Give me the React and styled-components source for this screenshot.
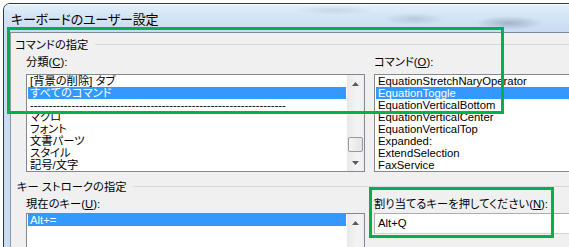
import styled, { createGlobalStyle } from 'styled-components';

const GlobalStyle = createGlobalStyle`
  html, body {
    margin: 0;
    padding: 0;
    background: #ffffff;
    overflow: hidden;
  }
  body {
    font-family: "Liberation Sans", "Noto Sans CJK JP", sans-serif;
    font-feature-settings: "palt";
    color: #000;
  }
`;

const Screen = styled.div`
  position: relative;
  width: 569px;
  height: 247px;
  overflow: hidden;
  padding: 3px 0 0 3px;
  box-sizing: border-box;
`;

const Window = styled.div`
  width: 640px;
  height: 300px;
  border: 1px solid #2c3845;
  border-radius: 7px 0 0 0;
  background: #cadcf0;
  display: flex;
  flex-direction: column;
  box-sizing: border-box;
  overflow: hidden;
`;

const TitleBar = styled.div`
  height: 28px;
  flex: none;
  display: flex;
  align-items: center;
  padding-left: 7px;
  font-family: "Noto Sans CJK JP", sans-serif;
  font-size: 13px;
  letter-spacing: -0.2px;
  background:
    radial-gradient(ellipse 34px 7px at 505px 19px, rgba(105, 125, 145, 0.45), transparent),
    radial-gradient(ellipse 30px 6px at 410px 15px, rgba(130, 150, 170, 0.35), transparent),
    radial-gradient(ellipse 40px 5px at 330px 6px, rgba(150, 170, 190, 0.3), transparent),
    linear-gradient(180deg, #e6f0fa 0%, #d6e6f6 35%, #c9dcf1 100%);
  box-shadow: inset 0 1px 0 rgba(255, 255, 255, 0.8);
`;

const Client = styled.div`
  flex: 1;
  margin-left: 6px;
  border-top: 1px solid #7c8a98;
  border-left: 1px solid #8b9aaa;
  background: #f0f0f0;
  font-size: 11.3px;
`;

const GroupHeader = styled.div`
  display: flex;
  align-items: center;
  gap: 7px;
  height: 14px;
  margin-top: ${(p) => p.$top}px;
  padding-left: ${(p) => p.$indent}px;
  white-space: nowrap;

  &::after {
    content: "";
    flex: 1;
    height: 1px;
    background: #d5dae0;
  }
`;

const Columns = styled.div`
  display: grid;
  grid-template-columns: 339px 260px;
  column-gap: 9px;
  padding-left: 15px;
`;

const Field = styled.div`
  display: flex;
  flex-direction: column;
`;

const Label = styled.div`
  height: 14px;
  line-height: 14px;
  margin-top: 4px;
  margin-bottom: ${(p) => p.$gap}px;
  white-space: nowrap;

  u {
    text-decoration: underline;
    text-underline-offset: 1px;
  }
`;

const ListBox = styled.div`
  display: flex;
  height: ${(p) => p.$height}px;
  border: 1px solid #828790;
  background: #ffffff;
  box-sizing: border-box;
  overflow: hidden;
`;

const Items = styled.div`
  flex: 1;
  padding: 0 1px;
  min-width: 0;
`;

const Item = styled.div`
  height: 12px;
  line-height: 12px;
  padding-left: 2px;
  white-space: nowrap;
  overflow: hidden;
  background: ${(p) => (p.$selected ? '#3399ff' : 'transparent')};
  color: ${(p) => (p.$selected ? '#ffffff' : '#000000')};
`;

const ScrollBar = styled.div`
  width: 17px;
  flex: none;
  display: flex;
  flex-direction: column;
  background: linear-gradient(90deg, #e9e9e9, #f4f4f4 60%, #eeeeee);
`;

const ArrowButton = styled.div`
  height: 17px;
  flex: none;
  display: flex;
  align-items: center;
  justify-content: center;
`;

const Thumb = styled.div`
  height: 15px;
  margin: ${(p) => p.$offset}px 1px 2px;
  border: 1px solid #999999;
  border-radius: 2px;
  background: linear-gradient(90deg, #f5f5f5, #e4e4e4);
  box-sizing: border-box;
  flex: none;
`;

const TextBox = styled.div`
  height: 21px;
  border: 1px solid #abadb3;
  border-bottom-color: #d0d3d8;
  background: #ffffff;
  box-sizing: border-box;
  padding-left: 3px;
  line-height: 19px;
  white-space: nowrap;
`;

const Callout = styled.div`
  position: absolute;
  left: ${(p) => p.$x}px;
  top: ${(p) => p.$y}px;
  width: ${(p) => p.$w}px;
  height: ${(p) => p.$h}px;
  border: 3px solid #00b050;
  box-sizing: border-box;
  pointer-events: none;
`;

const Arrow = ({ up }) => (
  <svg width="7" height="4" viewBox="0 0 7 4">
    <path d={up ? 'M0 4 L3.5 0 L7 4 Z' : 'M0 0 L3.5 4 L7 0 Z'} fill="#5a5a5a" />
  </svg>
);

const categories = [
  '[背景の削除] タブ',
  'すべてのコマンド',
  '-'.repeat(68),
  'マクロ',
  'フォント',
  '文書パーツ',
  'スタイル',
  '記号/文字',
];

const commands = [
  'EquationStretchNaryOperator',
  'EquationToggle',
  'EquationVerticalBottom',
  'EquationVerticalCenter',
  'EquationVerticalTop',
  'Expanded:',
  'ExtendSelection',
  'FaxService',
];

export default function App() {
  return (
    <>
      <GlobalStyle />
      <Screen>
        <Window>
          <TitleBar>キーボードのユーザー設定</TitleBar>
          <Client>
            <GroupHeader $top={4} $indent={4}>コマンドの指定</GroupHeader>
            <Columns>
              <Field>
                <Label $gap={5}>
                  分類(<u>C</u>):
                </Label>
                <ListBox $height={98}>
                  <Items>
                    {categories.map((c, i) => (
                      <Item key={i} $selected={i === 1}>
                        {c}
                      </Item>
                    ))}
                  </Items>
                  <ScrollBar>
                    <ArrowButton>
                      <Arrow up />
                    </ArrowButton>
                    <Thumb $offset={45} />
                    <ArrowButton>
                      <Arrow />
                    </ArrowButton>
                  </ScrollBar>
                </ListBox>
              </Field>
              <Field>
                <Label $gap={5}>
                  コマンド(<u>O</u>):
                </Label>
                <ListBox $height={98}>
                  <Items>
                    {commands.map((c, i) => (
                      <Item key={c} $selected={i === 1}>
                        {c}
                      </Item>
                    ))}
                  </Items>
                </ListBox>
              </Field>
            </Columns>

            <GroupHeader $top={7} $indent={6}>キー ストロークの指定</GroupHeader>
            <Columns>
              <Field>
                <Label $gap={2}>
                  現在のキー(<u>U</u>):
                </Label>
                <ListBox $height={60}>
                  <Items>
                    <Item $selected>Alt+=</Item>
                  </Items>
                  <ScrollBar>
                    <ArrowButton>
                      <Arrow up />
                    </ArrowButton>
                  </ScrollBar>
                </ListBox>
              </Field>
              <Field>
                <Label $gap={2}>
                  割り当てるキーを押してください(<u>N</u>):
                </Label>
                <TextBox>Alt+Q</TextBox>
              </Field>
            </Columns>
          </Client>
        </Window>
        <Callout $x={7} $y={27} $w={497} $h={87} />
        <Callout $x={369} $y={187} $w={185} $h={51} />
      </Screen>
    </>
  );
}
